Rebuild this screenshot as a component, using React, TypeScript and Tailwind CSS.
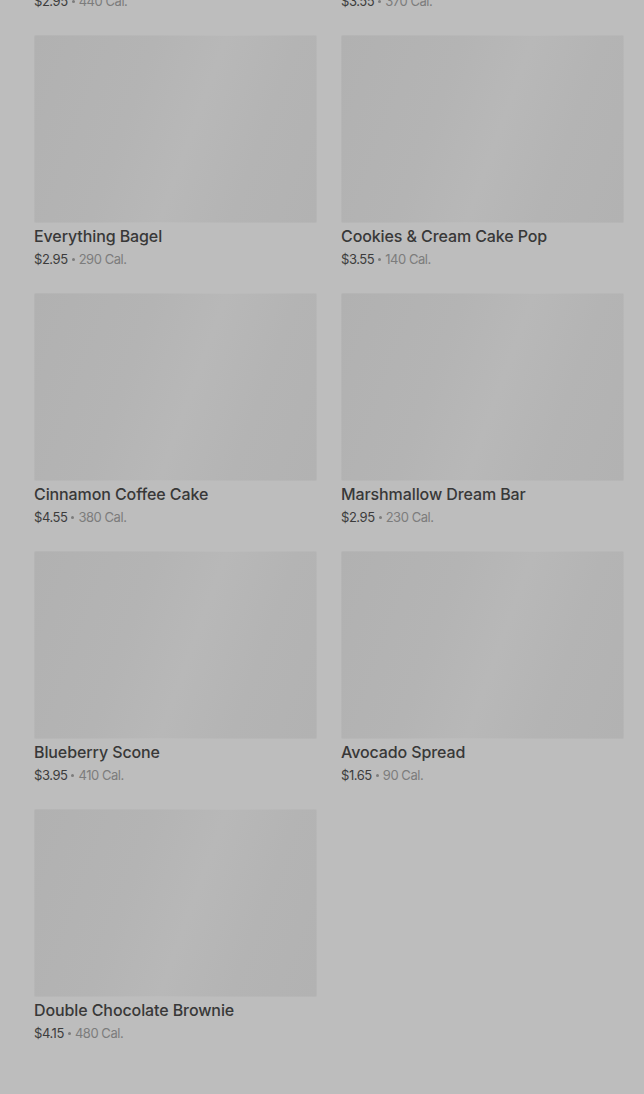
import React from "react";

const items = [
  { name: "Butter Croissant", price: "$2.95", cal: "440 Cal." },
  { name: "Chocolate Chip Cookie", price: "$3.55", cal: "370 Cal." },
  { name: "Everything Bagel", price: "$2.95", cal: "290 Cal." },
  { name: "Cookies & Cream Cake Pop", price: "$3.55", cal: "140 Cal." },
  { name: "Cinnamon Coffee Cake", price: "$4.55", cal: "380 Cal." },
  { name: "Marshmallow Dream Bar", price: "$2.95", cal: "230 Cal." },
  { name: "Blueberry Scone", price: "$3.95", cal: "410 Cal." },
  { name: "Avocado Spread", price: "$1.65", cal: "90 Cal." },
  { name: "Double Chocolate Brownie", price: "$4.15", cal: "480 Cal." },
];

export default function App() {
  return (
    <div
      className="w-[644px] h-[1094px] overflow-hidden bg-[#bdbdbd]"
      style={{ fontFamily: "Inter, Roboto, 'Liberation Sans', sans-serif" }}
    >
      <div className="grid grid-cols-2 gap-x-[24px] gap-y-[25px] pl-[34px] pr-[20px] -mt-[223px]">
        {items.map((it) => (
          <div key={it.name} className="flex flex-col">
            <div className="h-[188px] rounded-[2px] bg-[linear-gradient(110deg,#b1b1b1_0%,#b4b4b4_35%,#b8b8b8_55%,#b4b4b4_75%,#b2b2b2_100%)] shadow-[inset_0_0_0_1px_rgba(255,255,255,0.06)]" />
            <div className="mt-[3px] text-[16px] leading-5 font-medium text-[#383838] tracking-[-0.1px]">
              {it.name}
            </div>
            <div className="mt-[4px] flex h-[18px] items-center gap-[4px] text-[13px] leading-[18px] tracking-[-0.45px]">
              <span className="text-[#3c3c3c]">{it.price}</span>
              <span className="h-[3px] w-[3px] rounded-full bg-[#7c7c7c]" />
              <span className="text-[#7c7c7c]">{it.cal}</span>
            </div>
          </div>
        ))}
      </div>
    </div>
  );
}
